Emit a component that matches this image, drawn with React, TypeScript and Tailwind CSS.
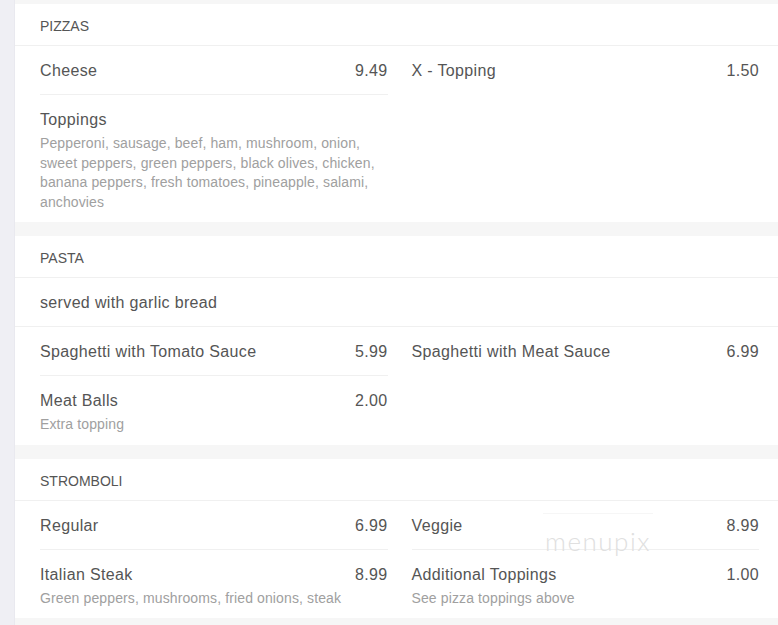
import React from 'react';

// ============================================
// Types
// ============================================

interface MenuItem {
  name: string;
  price?: string;
  desc?: string;
}

interface MenuSection {
  title: string;
  note?: string;
  left: MenuItem[];
  right: MenuItem[];
  watermark?: boolean;
}

// ============================================
// Data
// ============================================

const sections: MenuSection[] = [
  {
    title: 'PIZZAS',
    left: [
      { name: 'Cheese', price: '9.49' },
      {
        name: 'Toppings',
        desc: 'Pepperoni, sausage, beef, ham, mushroom, onion, sweet peppers, green peppers, black olives, chicken, banana peppers, fresh tomatoes, pineapple, salami, anchovies',
      },
    ],
    right: [{ name: 'X - Topping', price: '1.50' }],
  },
  {
    title: 'PASTA',
    note: 'served with garlic bread',
    left: [
      { name: 'Spaghetti with Tomato Sauce', price: '5.99' },
      { name: 'Meat Balls', price: '2.00', desc: 'Extra topping' },
    ],
    right: [{ name: 'Spaghetti with Meat Sauce', price: '6.99' }],
  },
  {
    title: 'STROMBOLI',
    left: [
      { name: 'Regular', price: '6.99' },
      { name: 'Italian Steak', price: '8.99', desc: 'Green peppers, mushrooms, fried onions, steak' },
    ],
    right: [
      { name: 'Veggie', price: '8.99' },
      { name: 'Additional Toppings', price: '1.00', desc: 'See pizza toppings above' },
    ],
    watermark: true,
  },
];

// ============================================
// Item
// ============================================

const Item: React.FC<{ item: MenuItem; last: boolean }> = ({ item, last }) => (
  <div
    className={`pt-[15px] ${item.desc ? 'pb-[10px]' : 'pb-[13px]'} ${
      last ? '' : 'border-b border-[#f0f0f0]'
    }`}
  >
    <div className="flex justify-between text-[16px] leading-[20px] tracking-[0.35px] text-[#555]">
      <span>{item.name}</span>
      {item.price && <span>{item.price}</span>}
    </div>
    {item.desc && (
      <p className="mt-[4px] text-[14px] leading-[19.5px] tracking-[0.12px] text-[#a0a0a0]">
        {item.desc}
      </p>
    )}
  </div>
);

// ============================================
// Section Card
// ============================================

const SectionCard: React.FC<{ section: MenuSection }> = ({ section }) => (
  <div className="relative bg-white">
    <div className="border-b border-[#f0f0f0] pl-[25px] pt-[12px] pb-[9px] text-[14px] leading-[20px] text-[#555]">
      {section.title}
    </div>
    {section.note && (
      <div className="border-b border-[#f0f0f0] pl-[25px] pt-[15px] pb-[13px] text-[16px] leading-[20px] tracking-[0.35px] text-[#555]">
        {section.note}
      </div>
    )}
    <div className="grid grid-cols-2 gap-x-[24px] pl-[25px] pr-[19px]">
      {[section.left, section.right].map((col, ci) => (
        <div key={ci} className="flex flex-col">
          {col.map((item, i) => (
            <Item key={item.name} item={item} last={i === col.length - 1} />
          ))}
        </div>
      ))}
    </div>

    {/* Watermark */}
    {section.watermark && (
      <div className="pointer-events-none absolute left-[528px] top-[54px] flex flex-col items-center">
        <div className="h-[1px] w-[110px] bg-[#f6f6f6]" />
        <span className="mt-[12px] text-[26px] leading-[30px] tracking-[1.5px] text-[#e0e0e0] font-['Lato','Liberation_Sans',sans-serif] font-light">
          menupix
        </span>
      </div>
    )}
  </div>
);

// ============================================
// App
// ============================================

export default function App() {
  return (
    <div className="flex h-[625px] w-[778px] overflow-hidden font-['Liberation_Sans',Arial,sans-serif]">
      <div className="w-[15px] shrink-0 border-r border-[#e9e9ef] bg-[#efeff4]" />
      <div className="flex flex-1 flex-col gap-[14px] bg-[#f6f6f6] pt-[4px]">
        {sections.map((s) => (
          <SectionCard key={s.title} section={s} />
        ))}
      </div>
    </div>
  );
}
